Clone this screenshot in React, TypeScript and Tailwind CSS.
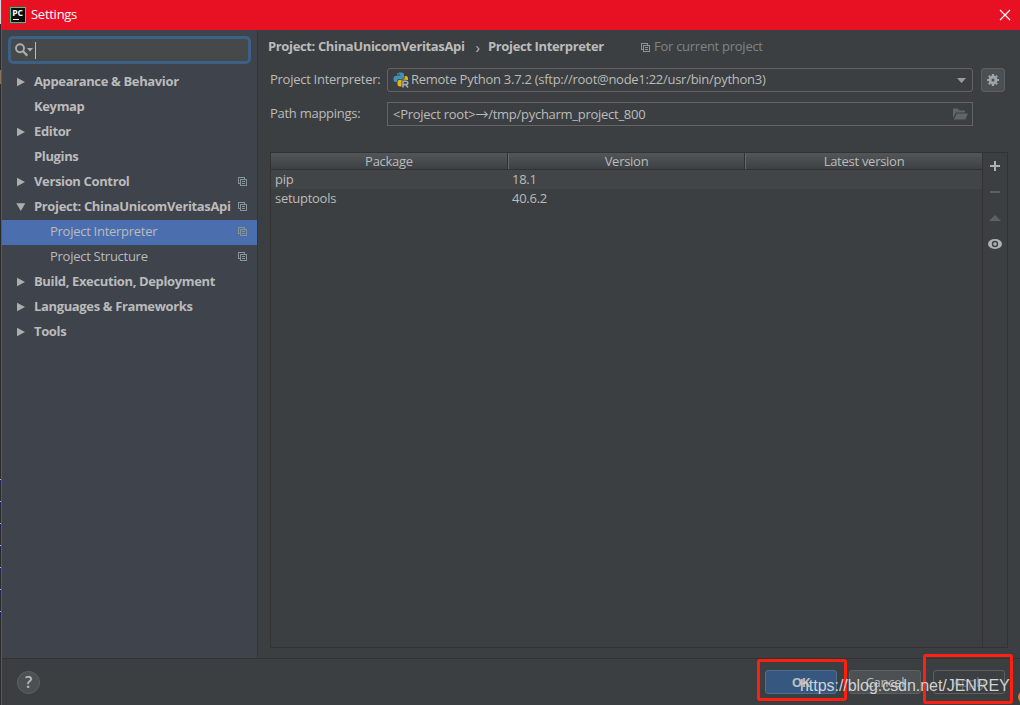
import { useState } from 'react'

type TreeItem = {
  label: string
  arrow?: 'right' | 'down'
  child?: boolean
  copy?: boolean
}

const treeItems: TreeItem[] = [
  { label: 'Appearance & Behavior', arrow: 'right' },
  { label: 'Keymap' },
  { label: 'Editor', arrow: 'right' },
  { label: 'Plugins' },
  { label: 'Version Control', arrow: 'right', copy: true },
  { label: 'Project: ChinaUnicomVeritasApi', arrow: 'down', copy: true },
  { label: 'Project Interpreter', child: true, copy: true },
  { label: 'Project Structure', child: true, copy: true },
  { label: 'Build, Execution, Deployment', arrow: 'right' },
  { label: 'Languages & Frameworks', arrow: 'right' },
  { label: 'Tools', arrow: 'right' }
]

const packages = [
  { name: 'pip', version: '18.1' },
  { name: 'setuptools', version: '40.6.2' }
]

const ticks = [479, 501, 523, 545, 567, 589, 611]

function CopyIcon({ className }: { className?: string }) {
  return (
    <svg className={`shrink-0 ${className}`} width="9" height="9" viewBox="0 0 9 9" fill="none" stroke="currentColor" shapeRendering="crispEdges">
      <path d="M2 6.5H0.5V0.5H6.5V2M2.5 2.5H8.5V8.5H2.5ZM4 4.5H7M4 6.5H7" />
    </svg>
  )
}

function Arrow({ dir }: { dir?: 'right' | 'down' }) {
  return (
    <svg className="shrink-0" width="10" height="10" viewBox="0 0 10 10" fill="#adadad">
      {dir === 'right' && <path d="M1 0.7L9 5L1 9.3Z" />}
      {dir === 'down' && <path d="M0.3 1.2H9.3L4.8 9Z" />}
    </svg>
  )
}

function TitleBar() {
  return (
    <header className="flex h-[30px] shrink-0 items-center bg-[#e81123] pb-px pl-2 pr-[9px]">
      <svg width="16" height="16" viewBox="0 0 16 16">
        <rect x="0.5" y="0.5" width="15" height="15" fill="#0b0b0b" stroke="#21d789" />
        <text x="2.2" y="8.8" fill="#fff" fontFamily="Open Sans, sans-serif" fontSize="8.6" fontWeight="700" letterSpacing="0">PC</text>
        <rect x="3" y="12" width="6" height="1" fill="#fff" />
      </svg>
      <span className="ml-[5px] flex-1 pt-px text-[13px] text-white">Settings</span>
      <svg width="12" height="12" viewBox="0 0 12 12" stroke="#fff" strokeWidth="1.2">
        <path d="M1 1L11 11M11 1L1 11" />
      </svg>
    </header>
  )
}

function Sidebar() {
  const [selected, setSelected] = useState('Project Interpreter')

  return (
    <aside className="w-64 shrink-0 border-r border-[#323436] bg-[#3f434c] pt-1.5">
      <div className="mx-1.5 mb-1.5 flex h-7 w-[243px] items-center rounded-[5px] border-[3px] border-[#3d6185] bg-[#45494a] pl-1">
        <svg width="19" height="14" viewBox="0 0 19 14" fill="none" stroke="#adadad">
          <circle cx="5" cy="5.3" r="4" strokeWidth="1.9" />
          <path d="M8 8.3L12.3 12.6" strokeWidth="2.2" />
          <path d="M12 5H18L15 8.5Z" fill="#adadad" stroke="none" />
        </svg>
        <span className="ml-px h-[17px] w-px bg-[#bbbbbb]" />
      </div>
      {treeItems.map((item) => (
        <div
          key={item.label}
          onClick={() => setSelected(item.label)}
          className={`flex h-[25px] items-center pb-0.5 pl-3.5 pr-[10px] text-[13px] text-[#bbbbbb] ${selected === item.label ? 'bg-[#4b6eaf]' : ''}`}
        >
          <Arrow dir={item.arrow} />
          <span className={`flex-1 whitespace-nowrap ${item.child ? 'ml-6' : 'ml-2 font-bold tracking-[-0.36px]'}`}>
            {item.label}
          </span>
          {item.copy && <CopyIcon className="text-[#87939a]" />}
        </div>
      ))}
    </aside>
  )
}

function InterpreterForm() {
  return (
    <div className="pl-3 pr-[15px]">
      <div className="-ml-0.5 flex h-[34px] items-center">
        <span className="w-[196px] whitespace-nowrap font-bold tracking-[-0.36px]">Project: ChinaUnicomVeritasApi</span>
        <span className="w-6 pl-[3px] text-center text-[15px]">›</span>
        <span className="w-[153px] whitespace-nowrap font-bold tracking-[-0.36px]">Project Interpreter</span>
        <CopyIcon className="text-[#87939a]" />
        <span className="ml-1 text-[#808385]">For current project</span>
      </div>
      <div className="mt-1 flex h-6">
        <label className="w-[117px] leading-[23px]">Project Interpreter:</label>
        <div className="flex w-[586px] items-center rounded-[3px] border border-[#646464] pl-[5px] pr-1.5">
          <svg width="16" height="16" viewBox="0 0 16 16">
            <path d="M4 4V2.4Q4 0.5 6.5 0.5H8.5Q11 0.5 11 2.5V5.5Q11 7 9 7H6Q4 7 4 9V10H2.5Q0.5 10 0.5 7Q0.5 4 2.5 4H7.5V3.5H4Z" fill="#3e93bd" />
            <path d="M11.7 4H13Q15 4 15 7V8H9V14.5H7Q4.5 14.5 4.5 12.5V10Q4.5 8 6.5 7.8H9.5Q11.7 7.5 11.7 5.5Z" fill="#e5b40f" />
            <circle cx="5.8" cy="2.3" r="0.7" fill="#3c3f41" />
            <path d="M10 15.5V9.2H12.8Q14.8 9.2 14.8 11Q14.8 12.6 12.8 12.6H10M12.6 12.6L15 15.5" fill="none" stroke="#3c3f41" strokeWidth="3" />
            <path d="M10 15.5V9.2H12.8Q14.8 9.2 14.8 11Q14.8 12.6 12.8 12.6H10M12.6 12.6L15 15.5" fill="none" stroke="#a2abb1" strokeWidth="1.6" />
          </svg>
          <span className="ml-0.5 flex-1">Remote Python 3.7.2 (sftp://root@node1:22/usr/bin/python3)</span>
          <svg width="9" height="5" viewBox="0 0 9 5" fill="#9a9da0"><path d="M0 0H9L4.5 5Z" /></svg>
        </div>
        <button className="ml-2 flex w-6 items-center justify-center rounded-[3px] border border-[#5e6060] bg-[#4c5052]">
          <svg width="12" height="12" viewBox="-6 -6 12 12" fill="none" stroke="#9aa5ad">
            <circle r="3" strokeWidth="3" />
            <path d="M0 -6V-4M0 6V4M-6 0H-4M6 0H4M-4.2 -4.2L-3 -3M4.2 4.2L3 3M4.2 -4.2L3 -3M-4.2 4.2L-3 3" strokeWidth="2.2" />
          </svg>
        </button>
      </div>
      <div className="mt-2.5 flex h-6">
        <label className="w-[117px] leading-[23px]">Path mappings:</label>
        <div className="flex w-[586px] items-center border border-[#646464] pl-[5px] pr-1">
          <span className="flex-1 leading-5">
            &lt;Project root&gt;<span className="font-['Noto_Sans_CJK_SC',sans-serif] leading-none">→</span>/tmp/pycharm_project_800
          </span>
          <svg width="15" height="12" viewBox="0 0 15 12" fill="#5f6668">
            <path d="M0 10V0.5H4.5L6.5 2.5H12V4.5H3Z" />
            <path d="M3.7 5.5H15L12.3 11.5H0.8Z" />
          </svg>
        </div>
      </div>
    </div>
  )
}

function PackageTable() {
  return (
    <div className="ml-3 mt-[26px] flex h-[496px] w-[738px] border border-[#323232]">
      <div className="w-[712px] border-r border-[#323232]">
        <div className="grid h-[17px] grid-cols-[237px_237px_1fr] border-b border-[#323232] bg-linear-to-b from-[#525658] to-[#3e4143] text-center leading-4">
          <span className="border-r border-[#2e3032]">Package</span>
          <span className="border-l border-r border-l-[#65686a] border-r-[#2e3032]">Version</span>
          <span className="border-l border-l-[#65686a]">Latest version</span>
        </div>
        {packages.map((pkg, i) => (
          <div key={pkg.name} className={`grid h-[19px] grid-cols-[237px_237px_1fr] leading-[19px] ${i === 0 ? 'bg-[#414547]' : ''}`}>
            <span className="pl-1">{pkg.name}</span>
            <span className="pl-1">{pkg.version}</span>
          </div>
        ))}
      </div>
      <div className="flex flex-1 flex-col items-center pt-2">
        <svg width="14" height="90" viewBox="0 0 14 90">
          <path d="M2 5H12M7 0V10" stroke="#afb1b3" strokeWidth="2" />
          <path d="M2 31H12" stroke="#5d6062" strokeWidth="2" />
          <path d="M1 60L7 54L13 60Z" fill="#5d6062" />
          <ellipse cx="7" cy="83" rx="7" ry="5" fill="#afb1b3" />
          <circle cx="7" cy="83" r="3.2" fill="#3c3f41" />
          <circle cx="7" cy="83" r="1.8" fill="#afb1b3" />
        </svg>
      </div>
    </div>
  )
}

function Footer() {
  return (
    <footer className="flex flex-1 items-start justify-between border-t border-[#323232] pl-[15px] pr-[15px] pt-[11px]">
      <button className="mt-px size-[23px] rounded-full border border-[#5e6060] bg-[#4c5052] text-center text-base leading-[21px] font-semibold">?</button>
      <div className="flex gap-3">
        <button className="h-6 w-[72px] rounded-[3px] border border-[#4c708c] bg-[#365880] pt-px font-bold">OK</button>
        <button className="h-6 w-[72px] rounded-[3px] border border-[#5e6060] bg-[#4c5052] pt-px">Cancel</button>
        <button className="h-6 w-[72px] rounded-[3px] border border-[#5e6060] pt-px text-[#777777]">Apply</button>
      </div>
    </footer>
  )
}

export default function App() {
  return (
    <div className="relative flex h-[705px] w-[1020px] overflow-hidden bg-[#2b2b2b] font-['Open_Sans','Noto_Sans',sans-serif] text-[13px] tracking-[-0.27px] text-[#bbbbbb]">
      <div className="ml-px flex flex-1 flex-col border-l border-[#d8222c] bg-[#3c3f41]">
        <TitleBar />
        <div className="flex h-[628px] shrink-0">
          <Sidebar />
          <main className="flex-1">
            <InterpreterForm />
            <PackageTable />
          </main>
        </div>
        <Footer />
      </div>

      {/* Editor behind the dialog */}
      <div className="absolute left-0 top-0 h-6 w-px bg-[#d5d8dc]" />
      <div className="absolute left-0 top-[70px] h-3.5 w-px bg-[#8a7054]" />
      {ticks.map((y) => (
        <div key={y} className="absolute left-0 h-1.5 w-px border-t border-[#b8b8c8] bg-[#25205c]" style={{ top: y }} />
      ))}

      {/* Annotations */}
      <div className="absolute left-[757px] top-[659px] h-[42px] w-[90px] rounded-[3px] border-[3px] border-[#ff2012]" />
      <div className="absolute left-[923px] top-[654px] h-[50px] w-[90px] rounded-[3px] border-[3px] border-[#ff2012]" />
      <div className="absolute left-[800px] top-[676px] whitespace-nowrap font-['Liberation_Sans',sans-serif] text-base leading-5 tracking-[-0.04px] text-[#d2d3d4]">
        https://blog.csdn.net/JENREY
      </div>
      <div className="absolute left-[1018px] top-[691px] h-3 w-4 rounded-full bg-[#ee7038]" />
    </div>
  )
}
